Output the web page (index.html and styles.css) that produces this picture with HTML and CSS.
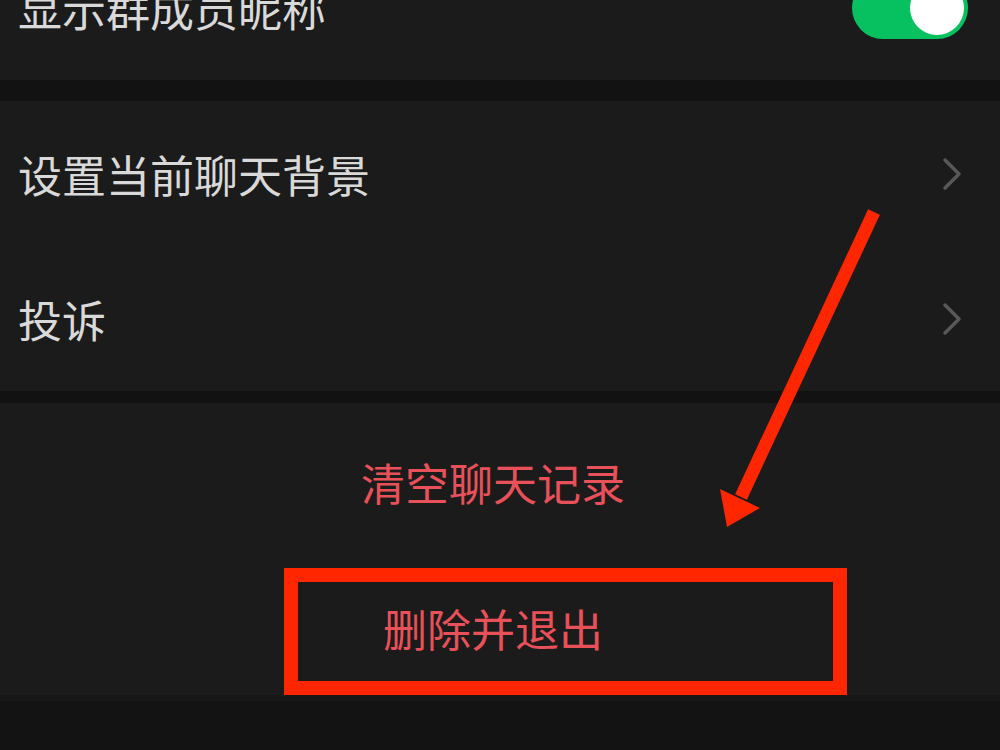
FILE: index.html
```html
<!DOCTYPE html>
<html lang="zh-CN">
<head>
<meta charset="utf-8">
<title>聊天信息</title>
<link rel="stylesheet" href="styles.css">
</head>
<body>
<div class="page">
  <div class="section">
    <div class="row">
      <span class="label">显示群成员昵称</span>
      <span class="switch"><span class="knob"></span></span>
    </div>
  </div>
  <div class="gap gap-a"></div>
  <div class="section">
    <div class="row mid">
      <span class="label">设置当前聊天背景</span>
      <svg class="chev" viewBox="0 0 20 34" width="20" height="34"><path d="M3 3 L17 17 L3 31" /></svg>
    </div>
    <div class="row mid">
      <span class="label">投诉</span>
      <svg class="chev" viewBox="0 0 20 34" width="20" height="34"><path d="M3 3 L17 17 L3 31" /></svg>
    </div>
  </div>
  <div class="gap gap-b"></div>
  <div class="section">
    <div class="row action">清空聊天记录</div>
    <div class="row action">删除并退出</div>
  </div>
  <div class="gap gap-c"></div>
</div>
<div class="mark-box"></div>
<svg class="mark-arrow" viewBox="0 0 1000 750" width="1000" height="750">
  <line x1="874" y1="212" x2="741" y2="497" />
  <polygon points="720,489 760,508 727,527" />
</svg>
</body>
</html>
```

FILE: styles.css
```css
html, body {
  margin: 0;
  padding: 0;
}
body {
  width: 1000px;
  height: 750px;
  overflow: hidden;
  background: #131313;
  font-family: "Noto Sans CJK SC", "Noto Sans", sans-serif;
  position: relative;
}
.page {
  margin-top: -64px;
}
.section {
  background: #1b1b1b;
}
.gap {
  background: #121212;
}
.gap-a {
  height: 21px;
}
.gap-b {
  height: 12px;
}
.gap-c {
  height: 6px;
  background: #171717;
}
.row {
  height: 144px;
  box-sizing: border-box;
  display: flex;
  align-items: center;
  justify-content: space-between;
  padding: 0 36px 0 18px;
  font-size: 44px;
  color: #d9d9d9;
}
.row.mid {
  height: 145px;
}
.label {
  line-height: 1;
}
.row.action {
  height: 146px;
  justify-content: center;
  padding: 12px 14px 0 0;
  color: #e9515a;
}
.switch {
  width: 116px;
  height: 62px;
  border-radius: 31px;
  background: #07c160;
  display: flex;
  justify-content: flex-end;
  align-items: center;
  padding: 0 4px;
  box-sizing: border-box;
  margin-right: -4px;
}
.knob {
  width: 54px;
  height: 54px;
  border-radius: 50%;
  background: #ffffff;
}
.chev {
  margin-right: 2px;
}
.chev path {
  fill: none;
  stroke: #585858;
  stroke-width: 3.5;
  stroke-linecap: round;
  stroke-linejoin: round;
}
.mark-box {
  position: absolute;
  left: 284px;
  top: 568px;
  width: 563px;
  height: 127px;
  box-sizing: border-box;
  border: 14px solid #ff2600;
}
.mark-arrow {
  position: absolute;
  left: 0;
  top: 0;
}
.mark-arrow line {
  stroke: #ff2600;
  stroke-width: 13;
}
.mark-arrow polygon {
  fill: #ff2600;
}
```
